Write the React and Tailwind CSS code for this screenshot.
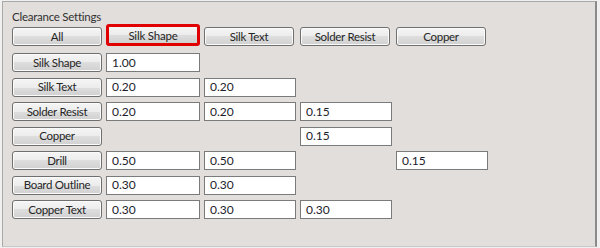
import React from "react";

const font = { fontFamily: 'Lato, "Noto Sans", sans-serif' };

function Btn({ label, red }) {
  if (red) {
    return (
      <div className="h-[22px] -mx-[2px] rounded-[3px] border-[3px] border-[#e00000] bg-[linear-gradient(to_bottom,#f5f5f5_0%,#ececec_50%,#dedede_50%,#d0d0d0_100%)] flex items-center justify-center pt-[1px] text-[11.5px] tracking-[-0.2px] text-[#262626] leading-none">
        {label}
      </div>
    );
  }
  return (
    <div className="h-[19px] rounded-[3px] border border-[#6f6f6f] bg-[linear-gradient(to_bottom,#f5f5f5_0%,#ececec_50%,#dedede_50%,#d0d0d0_100%)] shadow-[inset_0_0_0_1px_#fbfbfb] flex items-center justify-center text-[11.5px] tracking-[-0.3px] text-[#262626] leading-none">
      {label}
    </div>
  );
}

function Field({ value }) {
  return (
    <div className="h-[19px] -ml-[2px] border border-[#7b7b7b] bg-white flex items-center pl-[5px] text-[12px] text-[#1c1c2c] leading-none">
      {value}
    </div>
  );
}

const rows = [
  ["Silk Shape", ["1.00", null, null, null]],
  ["Silk Text", ["0.20", "0.20", null, null]],
  ["Solder Resist", ["0.20", "0.20", "0.15", null]],
  ["Copper", [null, null, "0.15", null]],
  ["Drill", ["0.50", "0.50", null, "0.15"]],
  ["Board Outline", ["0.30", "0.30", null, null]],
  ["Copper Text", ["0.30", "0.30", "0.30", null]],
];

export default function App() {
  return (
    <div className="w-[600px] h-[248px] bg-[#f0f0f0] pt-[1px] pl-[2px]" style={font}>
      <div className="w-[595px] h-[246px] bg-[#e1dedc] border-l border-t border-[#a8a8a8] border-r-2 border-r-[#8a8a8a] border-b border-b-[#c8c8c8] pl-[9px] pt-[7px]">
        <div className="text-[11.5px] tracking-[-0.25px] text-[#303030] leading-[15px] h-[15px]">Clearance Settings</div>
        <div className="grid grid-cols-[90px_90px_90px_90px_90px] gap-x-[6px] items-end h-[22px]">
          <Btn label="All" />
          <Btn label="Silk Shape" red />
          <Btn label="Silk Text" />
          <Btn label="Solder Resist" />
          <Btn label="Copper" />
        </div>
        <div className="flex flex-col gap-[5.5px] mt-[7px]">
          {rows.map(([label, vals]) => (
            <div key={label} className="grid grid-cols-[90px_92px_90px_90px_90px] gap-x-[6px] h-[19px]">
              <Btn label={label} />
              {vals.map((v, i) => (v == null ? <div key={i} /> : <Field key={i} value={v} />))}
            </div>
          ))}
        </div>
      </div>
    </div>
  );
}
